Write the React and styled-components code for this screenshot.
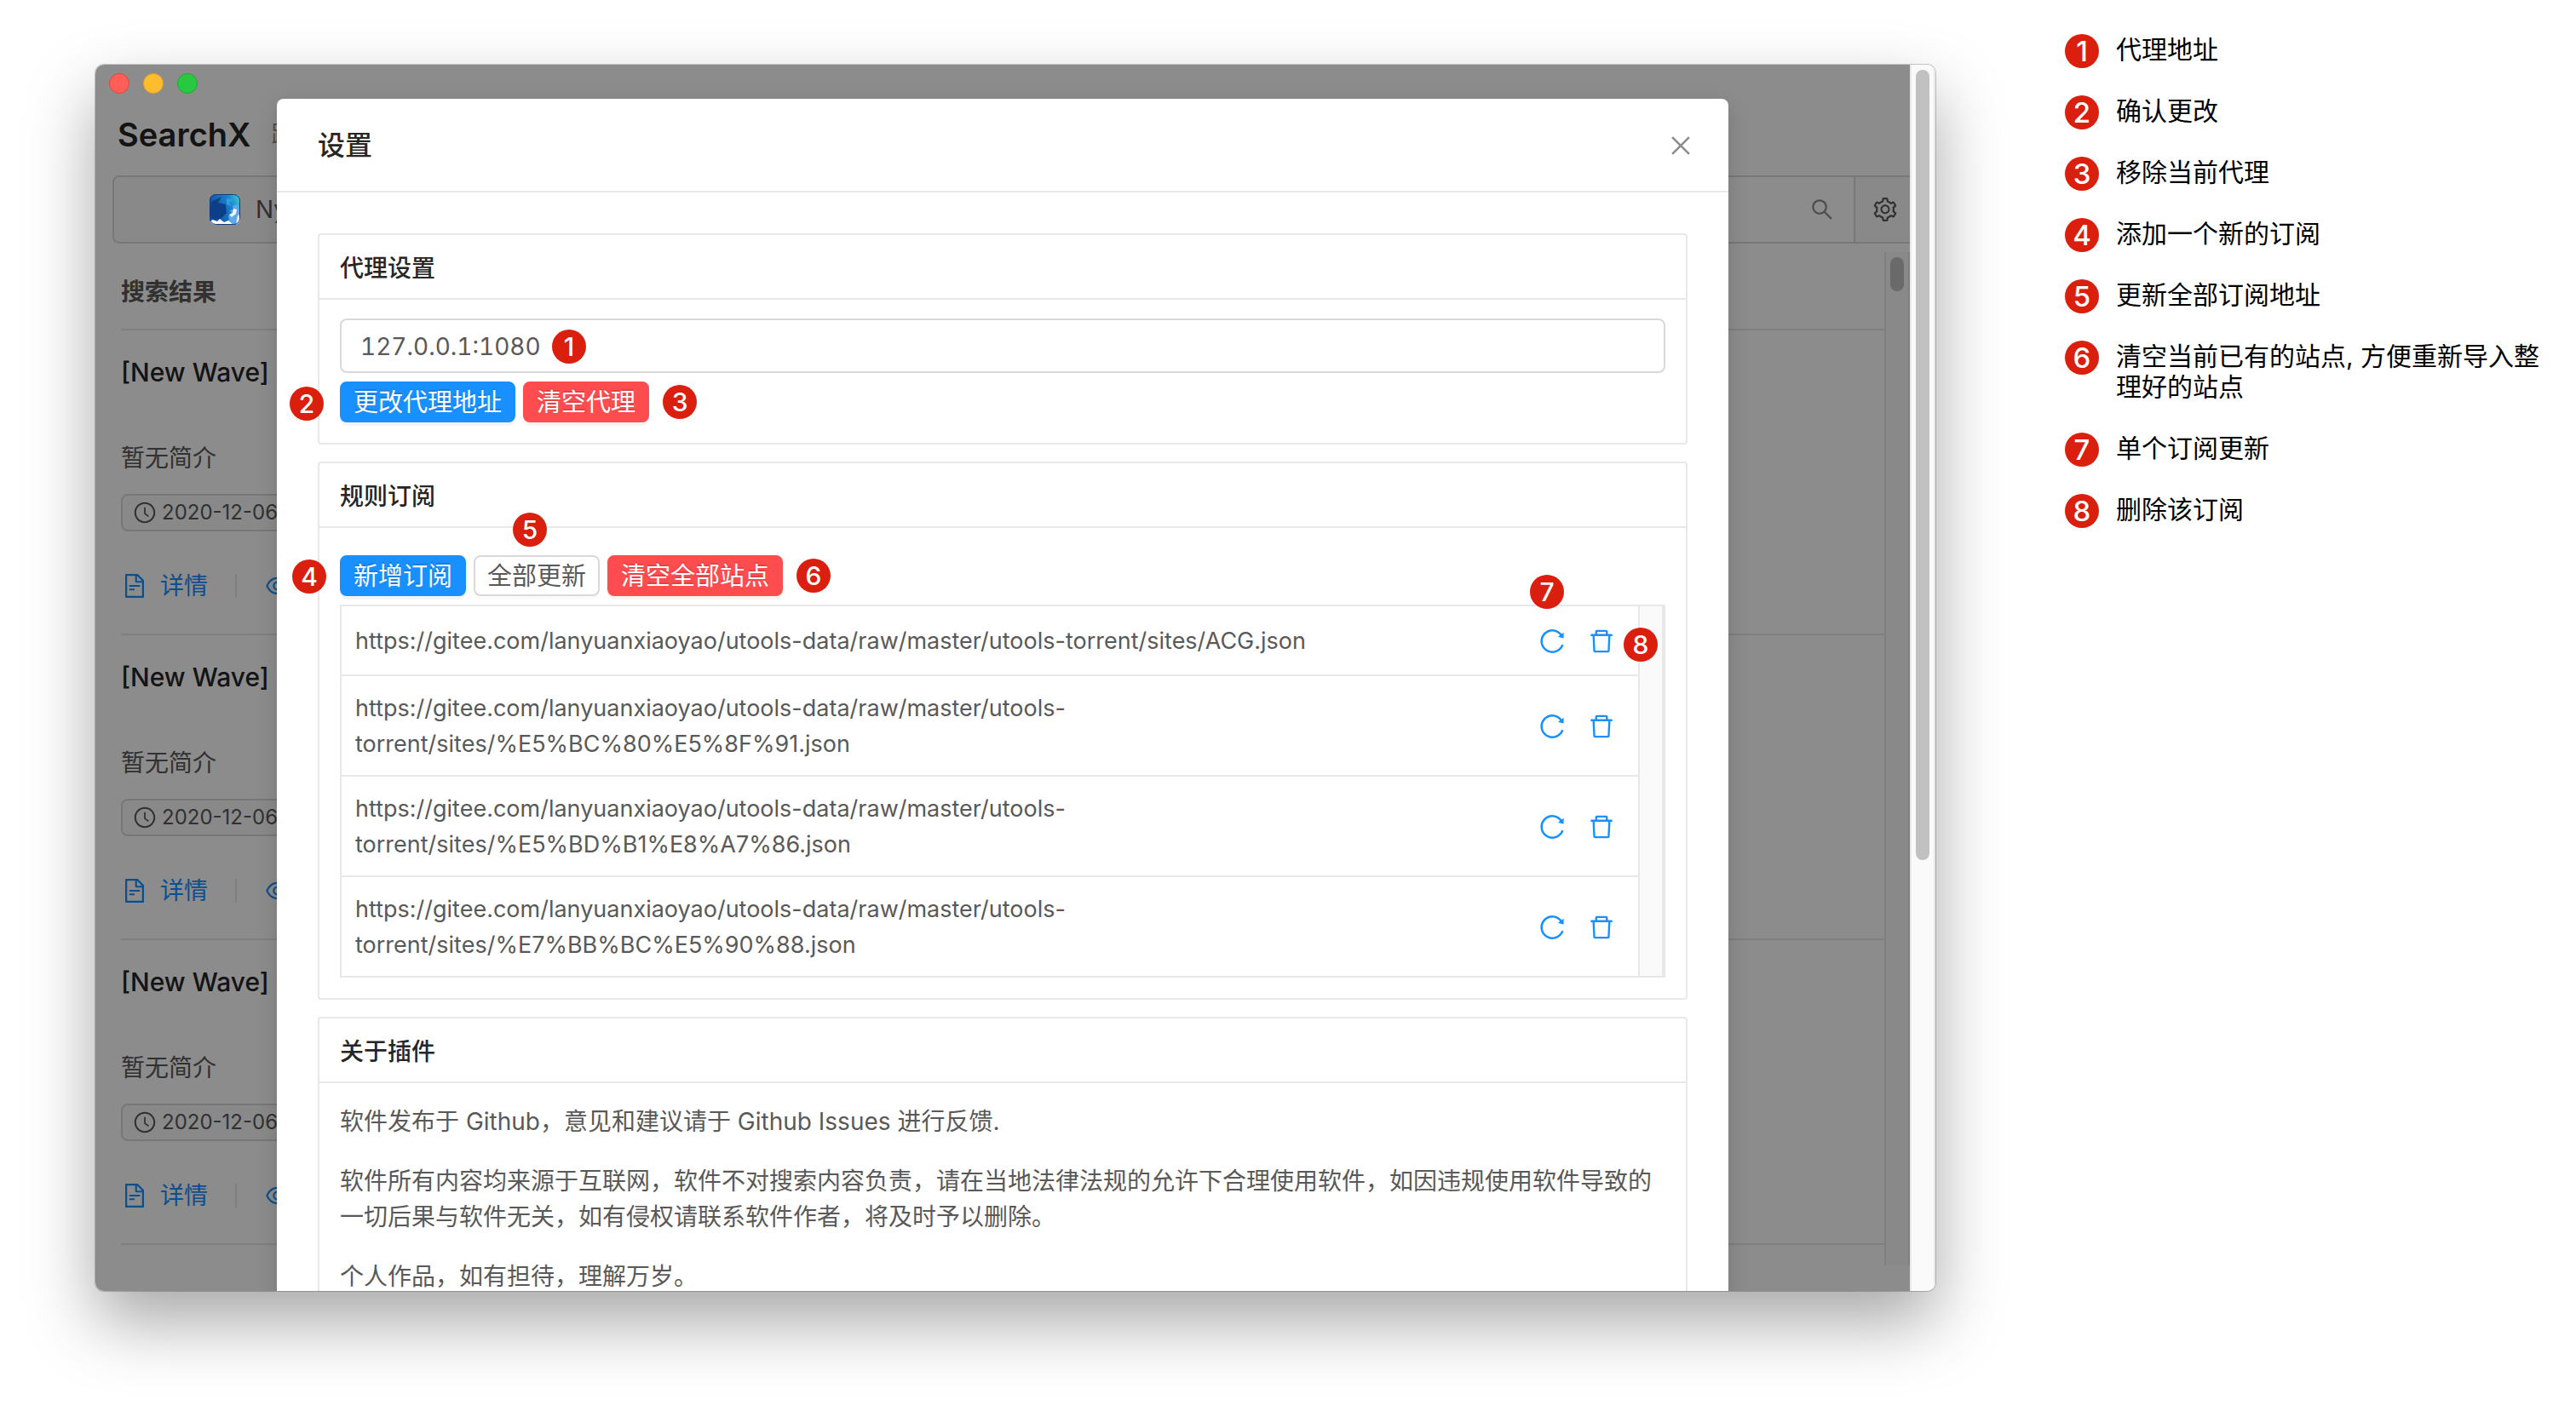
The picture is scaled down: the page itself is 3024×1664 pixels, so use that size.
import React from "react";
import styled, { createGlobalStyle, css } from "styled-components";
import {
  AiOutlineClockCircle,
  AiOutlineClose,
  AiOutlineDelete,
  AiOutlineEye,
  AiOutlineFileText,
  AiOutlineReload,
  AiOutlineSearch,
  AiOutlineSetting,
} from "react-icons/ai";

const color = {
  text: "#595959",
  heading: "#262626",
  line: "#e8e8e8",
  control: "#d9d9d9",
  primary: "#1890ff",
  danger: "#ff4d4f",
  marker: "#db1f0e",
};

const GlobalStyle = createGlobalStyle`
  *, *::before, *::after { box-sizing: border-box; }
  body {
    margin: 0;
    background: #fff;
    color: ${color.text};
    font-family: Inter, "Noto Sans CJK SC", sans-serif;
    font-size: 28px;
    line-height: 42px;
    -webkit-font-smoothing: antialiased;
  }
  h1, h2, h3, p, ul, ol { margin: 0; padding: 0; }
  ul, ol { list-style: none; }
  button, input { font: inherit; color: inherit; }
  svg { display: block; flex: none; }
`;

const Page = styled.div`
  display: flex;
  align-items: flex-start;
  min-height: 100vh;
  padding: 0 24px 0 112px;
  overflow: hidden;
`;

/* ---------- desktop window ---------- */

const Window = styled.div`
  flex: 1;
  min-width: 0;
  display: flex;
  height: calc(100vh - 224px);
  margin: 76px 152px 0 0;
  border-radius: 10px;
  overflow: hidden;
  box-shadow: 0 0 0 1px rgba(0, 0, 0, 0.2), 0 36px 80px rgba(0, 0, 0, 0.35);
`;

const Viewport = styled.div`
  flex: 1;
  min-width: 0;
  position: relative;
  display: flex;
  flex-direction: column;
  background: #fff;
  overflow: hidden;
`;

const ScrollTrack = styled.div`
  flex: none;
  width: 30px;
  padding: 6px 4px;
  border: solid ${color.line};
  border-width: 0 2px;
  background: #fafafa;
  display: flex;
  justify-content: center;
`;

const ScrollThumb = styled.div`
  width: 16px;
  height: ${(p) => p.$height};
  border-radius: 8px;
  background: #c1c1c1;
`;

const TitleBar = styled.div`
  flex: none;
  position: relative;
  z-index: 3;
  display: flex;
  gap: 16px;
  height: 44px;
  padding: 10px 16px;
  pointer-events: none;
`;

const Light = styled.span`
  width: 24px;
  height: 24px;
  border-radius: 50%;
  background: ${(p) => p.$fill};
  border: 1px solid ${(p) => p.$edge};
`;

const AppHeader = styled.header`
  flex: none;
  display: flex;
  align-items: center;
  gap: 24px;
  height: 76px;
  margin-bottom: 10px;
  padding-left: 26px;
`;

const AppTitle = styled.h1`
  font-size: 38px;
  font-weight: 600;
  line-height: 64px;
  color: ${color.heading};
`;

const AppTagline = styled.span`
  color: #8c8c8c;
`;

const Toolbar = styled.div`
  flex: none;
  display: flex;
  height: 80px;
  margin: 0 -8px 10px 20px;
  border: 2px solid ${color.control};
  border-radius: 8px;
  background: #fafafa;
  overflow: hidden;
`;

const SitePicker = styled.button`
  display: flex;
  align-items: center;
  gap: 18px;
  width: 400px;
  padding: 0 0 0 112px;
  border: 0;
  background: none;
`;

const SearchField = styled.label`
  flex: 1;
  display: flex;
  align-items: center;
  padding-right: 22px;
  border-left: 2px solid ${color.control};
  background: #fff;
`;

const SearchInput = styled.input`
  flex: 1;
  height: 100%;
  border: 0;
  outline: 0;
  background: none;
`;

const GearButton = styled.button`
  display: flex;
  align-items: center;
  justify-content: center;
  width: 72px;
  padding: 0;
  border: 0;
  border-left: 2px solid ${color.control};
  background: none;
`;

const Results = styled.section`
  flex: 1;
  min-height: 0;
  display: flex;
  margin-bottom: 30px;
  padding-left: 30px;
`;

const ResultColumn = styled.div`
  flex: 1;
  min-width: 0;
  overflow: hidden;
`;

const ResultHeading = styled.h2`
  padding: 25px 0 21px;
  border-bottom: 2px solid ${color.line};
  font-size: 28px;
  font-weight: 600;
  line-height: 44px;
`;

const ResultItem = styled.li`
  display: flex;
  flex-direction: column;
  align-items: flex-start;
  padding: 24px 0 34px;
  border-bottom: 2px solid ${color.line};
`;

const ResultTitle = styled.h3`
  height: 104px;
  font-size: 30px;
  font-weight: 500;
  line-height: 50px;
  color: ${color.heading};
`;

const ResultSummary = styled.p`
  line-height: 44px;
`;

const DateTag = styled.span`
  display: flex;
  align-items: center;
  gap: 6px;
  height: 44px;
  margin: 20px 0 42px;
  padding: 0 12px;
  border: 2px solid ${color.control};
  border-radius: 8px;
  background: #fafafa;
  font-size: 24px;
`;

const ResultActions = styled.div`
  display: flex;
  align-items: center;
  line-height: 44px;
`;

const ResultLink = styled.a`
  display: flex;
  align-items: center;
  gap: 14px;
  color: ${color.primary};
  text-decoration: none;
`;

const ActionDivider = styled.span`
  width: 2px;
  height: 28px;
  margin: 0 32px;
  background: ${color.line};
`;

/* ---------- settings dialog ---------- */

const Mask = styled.div`
  position: absolute;
  inset: 0;
  z-index: 1;
  background: rgba(0, 0, 0, 0.45);
  overflow: hidden;
`;

const Dialog = styled.div`
  width: 80%;
  margin: 40px auto 0;
  border-radius: 8px;
  background: #fff;
  box-shadow: 0 8px 24px rgba(0, 0, 0, 0.15);
`;

const DialogHeader = styled.div`
  display: flex;
  align-items: center;
  justify-content: space-between;
  padding: 33px 40px 31px 48px;
  border-bottom: 2px solid ${color.line};
`;

const DialogTitle = styled.h2`
  font-size: 32px;
  font-weight: 500;
  line-height: 44px;
  color: ${color.heading};
`;

const CloseButton = styled.button`
  padding: 0;
  border: 0;
  background: none;
  color: #8c8c8c;
`;

const DialogBody = styled.div`
  display: flex;
  flex-direction: column;
  gap: 20px;
  padding: 48px;
`;

const CardBox = styled.section`
  border: 2px solid ${color.line};
  border-radius: 4px;
`;

const CardTitle = styled.h3`
  padding: 17px 24px 13px;
  border-bottom: 2px solid ${color.line};
  font-size: 28px;
  font-weight: 500;
  line-height: 44px;
  color: ${color.heading};
`;

const CardBody = styled.div`
  display: flex;
  flex-direction: column;
  gap: ${(p) => p.$gap || "10px"};
  padding: ${(p) => p.$top || "22px"} 24px 24px;
`;

const ProxyInput = styled.input`
  width: 100%;
  height: 64px;
  padding: 2px 22px 0;
  border: 2px solid ${color.control};
  border-radius: 8px;
  outline: 0;
  background: #fff;
  font-variant-numeric: tabular-nums;
`;

const ButtonRow = styled.div`
  display: flex;
  gap: 9px;
`;

const tones = {
  primary: css`
    border-color: ${color.primary};
    background: ${color.primary};
    color: #fff;
    text-shadow: 0 -2px 0 rgba(0, 0, 0, 0.12);
    box-shadow: 0 4px 0 rgba(0, 0, 0, 0.045);
  `,
  danger: css`
    border-color: ${color.danger};
    background: ${color.danger};
    color: #fff;
    text-shadow: 0 -2px 0 rgba(0, 0, 0, 0.12);
    box-shadow: 0 4px 0 rgba(0, 0, 0, 0.045);
  `,
  plain: css`
    border-color: ${color.control};
    background: #fff;
    color: ${color.text};
    box-shadow: 0 4px 0 rgba(0, 0, 0, 0.016);
  `,
};

const Button = styled.button`
  height: 48px;
  padding: 2px 14px 0;
  border: 2px solid;
  border-radius: 8px;
  font-size: 29px;
  line-height: 42px;
  white-space: nowrap;
  ${(p) => tones[p.$tone]}
`;

const Feed = styled.div`
  display: flex;
  border: 2px solid ${color.line};
  border-bottom: 0;
`;

const FeedList = styled.ul`
  flex: 1;
  min-width: 0;
`;

const FeedRow = styled.li`
  display: flex;
  align-items: center;
  justify-content: space-between;
  padding: 17px 26px 15px 16px;
  border-bottom: 2px solid ${color.line};
`;

const FeedUrl = styled.span`
  max-width: 1160px;
  font-size: 27px;
`;

const FeedActions = styled.div`
  display: flex;
  gap: 24px;
`;

const IconButton = styled.button`
  display: flex;
  align-items: center;
  justify-content: center;
  width: 34px;
  height: 48px;
  padding: 0;
  border: 0;
  background: none;
  color: ${color.primary};
`;

const FeedTrack = styled.div`
  flex: none;
  width: 30px;
  border: solid ${color.line};
  border-width: 0 2px 2px;
  background: #fafafa;
`;

/* ---------- numbered markers ---------- */

const Marker = styled.span`
  flex: none;
  display: inline-flex;
  align-items: center;
  justify-content: center;
  width: 40px;
  height: 40px;
  border-radius: 50%;
  background: ${color.marker};
  color: #fff;
  font-size: 30px;
  font-weight: 500;
  line-height: 40px;
`;

const Anchor = styled.div`
  position: relative;
  display: flex;
`;

const Callout = styled(Marker)`
  position: absolute;
  z-index: 2;
  left: ${(p) => p.$left};
  top: ${(p) => p.$top};
`;

const Legend = styled.ol`
  flex: none;
  width: 576px;
  display: flex;
  flex-direction: column;
  gap: 36px;
  padding-top: 40px;
`;

const LegendItem = styled.li`
  display: flex;
  gap: 20px;
  font-size: 30px;
  line-height: 36px;
  color: #000;

  ${Marker} {
    margin-bottom: -4px;
    font-size: 33px;
  }
`;

const SiteIcon = () => (
  <svg width="36" height="36" viewBox="0 0 36 36" aria-hidden="true">
    <defs>
      <linearGradient id="sky" x1="0" y1="0.4" x2="1" y2="0">
        <stop offset="0" stopColor="#1450a0" />
        <stop offset="0.6" stopColor="#1b7fd0" />
        <stop offset="1" stopColor="#3fd6d0" />
      </linearGradient>
      <clipPath id="tile">
        <rect width="36" height="36" rx="7" />
      </clipPath>
    </defs>
    <g clipPath="url(#tile)">
      <rect width="36" height="36" fill="url(#sky)" />
      <path d="M2 9l12-6-4 7 9 2 1 10-7 7-9 1-4-6z" fill="#0d3f86" />
      <path d="M20 5l8 2-5 3 3 4-6-2z" fill="#2fa0dc" />
      <path d="M27 14l5-2 4 4v20H17l6-6-1-5 4-2-2-4 4-1z" fill="#5ba8ea" />
      <path d="M28 17l4 1-1 5-5 4-3-3 4-2zM33 25l3-1v12h-5l1-6z" fill="#f1f7fd" />
      <path d="M0 32l4-2 5 2 3-3 5 4 5-2 6 5H0z" fill="#fff" />
    </g>
    <rect x="0.5" y="0.5" width="35" height="35" rx="7" fill="none" stroke="#123a78" />
  </svg>
);

const SiteIconSlot = styled.span`
  position: relative;
  z-index: 2;
`;

const Card = ({ id, title, children, ...body }) => (
  <CardBox aria-labelledby={id}>
    <CardTitle id={id}>{title}</CardTitle>
    <CardBody {...body}>{children}</CardBody>
  </CardBox>
);

const base = "https://gitee.com/lanyuanxiaoyao/utools-data/raw/master/utools-torrent/sites/";
const feeds = [
  "ACG.json",
  "%E5%BC%80%E5%8F%91.json",
  "%E5%BD%B1%E8%A7%86.json",
  "%E7%BB%BC%E5%90%88.json",
];

const legend = [
  "代理地址",
  "确认更改",
  "移除当前代理",
  "添加一个新的订阅",
  "更新全部订阅地址",
  "清空当前已有的站点, 方便重新导入整理好的站点",
  "单个订阅更新",
  "删除该订阅",
];

const Result = () => (
  <ResultItem>
    <ResultTitle>[New Wave]</ResultTitle>
    <ResultSummary>暂无简介</ResultSummary>
    <DateTag>
      <AiOutlineClockCircle size={28} />
      2020-12-06
    </DateTag>
    <ResultActions>
      <ResultLink href="#detail">
        <AiOutlineFileText size={32} />
        详情
      </ResultLink>
      <ActionDivider />
      <ResultLink href="#preview" aria-label="eye">
        <AiOutlineEye size={32} />
      </ResultLink>
    </ResultActions>
  </ResultItem>
);

export default function App() {
  return (
    <Page>
      <GlobalStyle />
      <Window>
        <Viewport>
          <TitleBar>
            <Light $fill="#ff5f57" $edge="#e2463f" />
            <Light $fill="#febc2e" $edge="#e0a028" />
            <Light $fill="#28c840" $edge="#1fab2f" />
          </TitleBar>
          <AppHeader>
            <AppTitle>SearchX</AppTitle>
            <AppTagline>跨</AppTagline>
          </AppHeader>
          <Toolbar>
            <SitePicker type="button">
              <SiteIconSlot>
                <SiteIcon />
              </SiteIconSlot>
              Nyaa
            </SitePicker>
            <SearchField>
              <SearchInput type="search" aria-label="search" />
              <AiOutlineSearch size={30} color="#8c8c8c" />
            </SearchField>
            <GearButton type="button" aria-label="settings">
              <AiOutlineSetting size={32} />
            </GearButton>
          </Toolbar>
          <Results>
            <ResultColumn>
              <ResultHeading>搜索结果</ResultHeading>
              <ul>
                <Result />
                <Result />
                <Result />
              </ul>
            </ResultColumn>
            <ScrollTrack>
              <ScrollThumb $height="40px" />
            </ScrollTrack>
          </Results>

          <Mask>
            <Dialog role="dialog" aria-labelledby="dialog-title">
              <DialogHeader>
                <DialogTitle id="dialog-title">设置</DialogTitle>
                <CloseButton type="button" aria-label="close">
                  <AiOutlineClose size={32} />
                </CloseButton>
              </DialogHeader>
              <DialogBody>
                <Card id="proxy" title="代理设置">
                  <Anchor>
                    <ProxyInput aria-labelledby="proxy" defaultValue="127.0.0.1:1080" />
                    <Callout $left="249px" $top="13px">1</Callout>
                  </Anchor>
                  <ButtonRow>
                    <Anchor>
                      <Button type="button" $tone="primary">更改代理地址</Button>
                      <Callout $left="-59px" $top="6px">2</Callout>
                    </Anchor>
                    <Anchor>
                      <Button type="button" $tone="danger">清空代理</Button>
                      <Callout $left="calc(100% + 16px)" $top="4px">3</Callout>
                    </Anchor>
                  </ButtonRow>
                </Card>

                <Card id="feeds" title="规则订阅" $top="32px">
                  <ButtonRow>
                    <Anchor>
                      <Button type="button" $tone="primary">新增订阅</Button>
                      <Callout $left="-56px" $top="5px">4</Callout>
                    </Anchor>
                    <Anchor>
                      <Button type="button" $tone="plain">全部更新</Button>
                      <Callout $left="46px" $top="-50px">5</Callout>
                    </Anchor>
                    <Anchor>
                      <Button type="button" $tone="danger">清空全部站点</Button>
                      <Callout $left="calc(100% + 16px)" $top="4px">6</Callout>
                    </Anchor>
                  </ButtonRow>
                  <Feed>
                    <FeedList>
                      {feeds.map((file, i) => (
                        <FeedRow key={file}>
                          <FeedUrl>{base + file}</FeedUrl>
                          <FeedActions>
                            <Anchor>
                              <IconButton type="button" aria-label="reload">
                                <AiOutlineReload size={34} />
                              </IconButton>
                              {i === 0 && <Callout $left="-9px" $top="-54px">7</Callout>}
                            </Anchor>
                            <Anchor>
                              <IconButton type="button" aria-label="delete">
                                <AiOutlineDelete size={34} />
                              </IconButton>
                              {i === 0 && <Callout $left="43px" $top="8px">8</Callout>}
                            </Anchor>
                          </FeedActions>
                        </FeedRow>
                      ))}
                    </FeedList>
                    <FeedTrack />
                  </Feed>
                </Card>

                <Card id="about" title="关于插件" $top="24px" $gap="28px">
                  <p>软件发布于 Github，意见和建议请于 Github Issues 进行反馈.</p>
                  <p>
                    软件所有内容均来源于互联网，软件不对搜索内容负责，请在当地法律法规的允许下合理使用软件，如因违规使用软件导致的一切后果与软件无关，如有侵权请联系软件作者，将及时予以删除。
                  </p>
                  <p>个人作品，如有担待，理解万岁。</p>
                </Card>
              </DialogBody>
            </Dialog>
          </Mask>
        </Viewport>
        <ScrollTrack>
          <ScrollThumb $height="65%" />
        </ScrollTrack>
      </Window>

      <Legend>
        {legend.map((text, i) => (
          <LegendItem key={text}>
            <Marker>{i + 1}</Marker>
            <span>{text}</span>
          </LegendItem>
        ))}
      </Legend>
    </Page>
  );
}
